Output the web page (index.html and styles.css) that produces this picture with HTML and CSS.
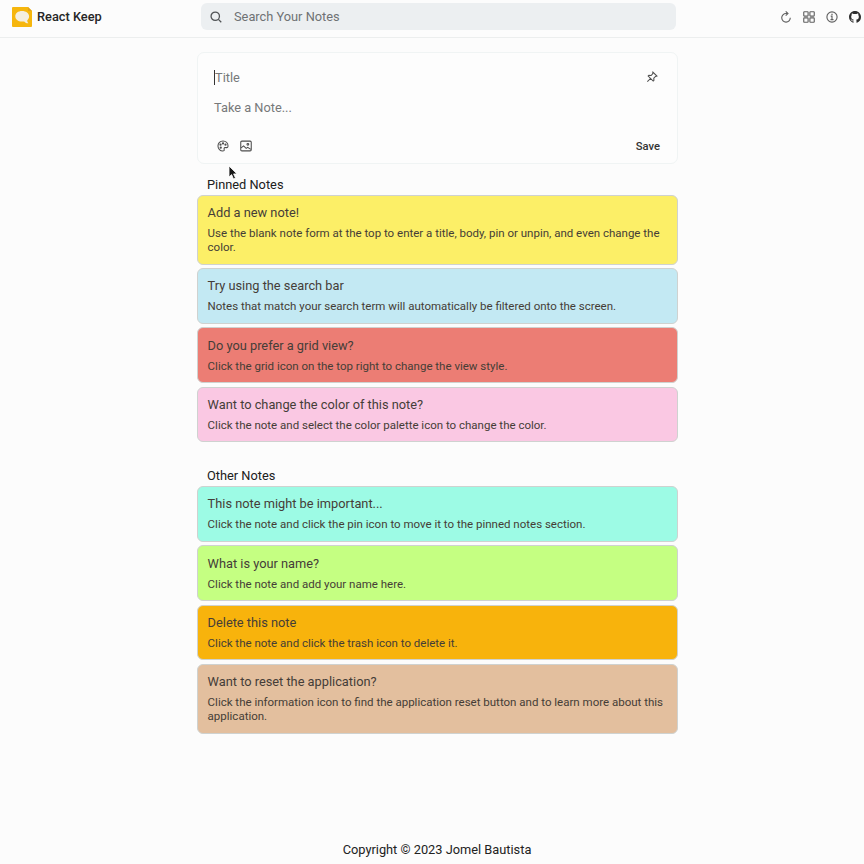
FILE: index.html
```
<!DOCTYPE html>
<html lang="en">
<head>
<meta charset="utf-8">
<title>React Keep</title>
<link rel="stylesheet" href="styles.css">
</head>
<body>
<header class="topbar">
  <div class="brand">
    <svg class="logo" viewBox="0 0 20 20"><path fill="#f6b60d" d="M1 0h15l4 4v15a1 1 0 0 1-1 1H1a1 1 0 0 1-1-1V1a1 1 0 0 1 1-1z"/><path fill="#e0a41a" d="M16 0v4h4z"/><path fill="#f4eedf" d="M10 4c-4 0-6.700 2.200-6.700 5.300 0 3.200 2.700 5.300 6.700 5.300.8 0 1.500-.1 2.200-.2 1 1.200 2.400 1.900 4.200 1.900-.8-.8-1.200-1.800-1.200-2.900 1.200-1 1.900-2.400 1.900-4.100C17.100 6.200 14 4 10 4z"/></svg>
    <span>React Keep</span>
  </div>
  <div class="search">
    <svg class="search-icon" viewBox="0 0 16 16"><circle cx="7" cy="7" r="5.600"/><path d="m11.200 11.200 3.800 3.800"/></svg>
    <span>Search Your Notes</span>
  </div>
  <nav class="actions">
    <svg viewBox="0 0 16 16" class="line"><path d="M9.500 3.400H8A5.700 5.700 0 1 0 13.700 9"/><path d="m7.600.6 3 2.800-3 2.800"/></svg>
    <svg viewBox="0 0 16 16" class="line"><rect x="1" y="1" width="5.800" height="5.800" rx=".8"/><rect x="9.200" y="1" width="5.800" height="5.800" rx=".8"/><rect x="1" y="9.200" width="5.800" height="5.800" rx=".8"/><rect x="9.200" y="9.200" width="5.800" height="5.800" rx=".8"/></svg>
    <svg viewBox="0 0 16 16" class="line"><circle cx="8" cy="8" r="6.800"/><path d="M6.300 6.800H8v4.700M6 11.500h4"/><path d="M8 3.700v1.500" stroke-width="1.600"/></svg>
    <svg viewBox="0 0 16 16" class="github"><path d="M8 0C3.580 0 0 3.580 0 8c0 3.540 2.290 6.530 5.470 7.590.4.070.55-.17.55-.38 0-.19-.01-.82-.01-1.490-2.010.37-2.530-.49-2.690-.94-.09-.23-.48-.94-.82-1.130-.28-.15-.68-.52-.01-.53.63-.01 1.080.58 1.230.82.72 1.210 1.870.87 2.330.66.07-.52.28-.87.51-1.070-1.780-.2-3.640-.89-3.640-3.950 0-.87.31-1.590.82-2.150-.08-.2-.36-1.020.08-2.120 0 0 .67-.21 2.200.82.64-.18 1.320-.27 2-.27s1.360.09 2 .27c1.530-1.040 2.200-.82 2.200-.82.44 1.100.16 1.920.08 2.120.51.56.82 1.270.82 2.150 0 3.070-1.870 3.750-3.650 3.950.29.25.54.73.54 1.480 0 1.070-.01 1.930-.01 2.200 0 .21.15.46.55.38A8.010 8.010 0 0 0 16 8c0-4.420-3.580-8-8-8"/></svg>
  </nav>
</header>
<main>
  <form class="composer">
    <div class="row"><span class="field field-active">Title</span>
      <svg class="pin" viewBox="0 0 16 16"><path d="m9.200 1.500 5.300 5.300-1.800.5-2.300 2.300.2 2.900-1 1L2.900 6.800l1-1 2.900.2 2.100-2.300zM6 10l-4.200 4.200"/></svg></div>
    <div class="row"><span class="field">Take a Note...</span></div>
    <div class="row tools">
      <svg viewBox="0 0 16 16"><path d="M8 1.300C4.200 1.300 1.300 4.200 1.300 8s3 6.700 6.500 6.700c1.300 0 2-.6 1.800-1.700-.3-1.500-.3-2.800 1.200-2.900 1.300-.1 3.900 1 3.900-2.100C14.700 4.200 11.800 1.300 8 1.300z"/><circle cx="8" cy="4.500" r=".8"/><circle cx="4.700" cy="6.300" r=".8"/><circle cx="11.300" cy="6.300" r=".8"/><circle cx="5" cy="10.200" r=".8"/></svg>
      <svg viewBox="0 0 16 16"><rect x="1" y="1.500" width="14" height="13" rx="1.500"/><path d="m1.500 10.500 3.300-2.600 3.400 3.300 2-1.400 4.300 2.700"/><circle cx="10.500" cy="5.800" r="1.200"/></svg>
      <span class="save">Save</span>
    </div>
  </form>
  <h2>Pinned Notes</h2>
  <section class="notes">
    <article class="note yellow"><h3>Add a new note!</h3><p>Use the blank note form at the top to enter a title, body, pin or unpin, and even change the color.</p></article>
    <article class="note blue"><h3>Try using the search bar</h3><p>Notes that match your search term will automatically be filtered onto the screen.</p></article>
    <article class="note red"><h3>Do you prefer a grid view?</h3><p>Click the grid icon on the top right to change the view style.</p></article>
    <article class="note pink"><h3>Want to change the color of this note?</h3><p>Click the note and select the color palette icon to change the color.</p></article>
  </section>
  <h2 class="other">Other Notes</h2>
  <section class="notes">
    <article class="note teal"><h3>This note might be important...</h3><p>Click the note and click the pin icon to move it to the pinned notes section.</p></article>
    <article class="note green"><h3>What is your name?</h3><p>Click the note and add your name here.</p></article>
    <article class="note orange"><h3>Delete this note</h3><p>Click the note and click the trash icon to delete it.</p></article>
    <article class="note tan"><h3>Want to reset the application?</h3><p>Click the information icon to find the application reset button and to learn more about this application.</p></article>
  </section>
</main>
<footer>Copyright © 2023 Jomel Bautista</footer>
<svg class="cursor" viewBox="0 0 10 15"><path d="M1 1v11l2.600-2.400 1.900 4.400 2-.9-1.900-4.200H9z" fill="#171717" stroke="#fff" stroke-width=".8"/></svg>
</body>
</html>
```
FILE: styles.css
```
* { box-sizing: border-box; }
body {
  margin: 0;
  height: 864px;
  display: flex;
  flex-direction: column;
  overflow: hidden;
  background: #fcfcfc;
  color: #262626;
  font-family: Roboto, "Liberation Sans", sans-serif;
}
.topbar {
  height: 38px;
  flex: none;
  display: grid;
  grid-template-columns: 201px 475px 1fr;
  align-items: start;
  border-bottom: 1px solid #eceeee;
}
.brand {
  display: flex;
  align-items: center;
  height: 33px;
  padding-left: 12px;
  gap: 5px;
  font-size: 12.800px;
  font-weight: 500;
}
.logo { width: 20px; height: 20px; }
.search {
  display: flex;
  align-items: center;
  gap: 12px;
  height: 27px;
  margin-top: 3px;
  padding-left: 9px;
  border-radius: 6px;
  background: #eceff1;
  color: #6f7274;
  font-size: 12.800px;
}
.search-icon { width: 12px; height: 12px; fill: none; stroke: #505355; stroke-width: 1.7; }
.actions {
  display: flex;
  align-items: center;
  justify-content: flex-end;
  gap: 11px;
  height: 33px;
  padding-right: 3px;
}
.actions svg { width: 12px; height: 12px; fill: #555; flex: none; }
.actions .line { fill: none; stroke: #606060; stroke-width: 1.5; }
.actions .github { fill: #2d2d2d; }
main { width: 481px; margin-left: 197px; padding-top: 14px; }
.composer {
  height: 112px;
  padding: 10px 17px 0 16px;
  border: 1px solid #f0f4f4;
  border-radius: 7px;
  background: #fdfdfd;
}
.row {
  display: flex;
  align-items: center;
  height: 28px;
  margin-bottom: 2px;
}
.field { color: #77797a; font-size: 12.800px; line-height: 15px; }
.field-active { box-shadow: -1px 0 #333; margin-left: 1px; }
.pin { width: 12px; height: 12px; margin-left: auto; margin-right: 2px; }
.composer svg { fill: none; stroke: #4d4d4d; stroke-width: 1.4; }
.tools { margin-top: 11px; padding-left: 2.500px; gap: 11px; }
.tools svg { width: 12px; height: 12px; }
.save { margin-left: auto; font-size: 11.200px; font-weight: 500; color: #333; }
h2 {
  margin: 13px 0 2px 10px;
  font-size: 12.800px;
  line-height: 16px;
  font-weight: 400;
  color: #202020;
}
.other { margin-top: 26px; }
.notes { display: grid; gap: 3.400px; }
.note {
  padding: 9.200px 9.600px 9.600px;
  border: 1px solid #cfd2d0;
  border-radius: 6px;
}
h3 { margin: 0 0 5px; font-size: 12.800px; line-height: 16px; font-weight: 400; color: #453d38; }
p { margin: 0; font-size: 11.500px; line-height: 14px; color: #453d36; }
.yellow { background: #fcef67; }
.blue { background: #c3e9f3; }
.red { background: #ec7d74; }
.pink { background: #fac8e3; }
.teal { background: #9dfbe5; }
.green { background: #c5ff82; }
.orange { background: #f8b30c; }
.tan { background: #e3bf9e; }
footer {
  margin-top: auto;
  height: 28px;
  padding-left: 10px;
  line-height: 28px;
  text-align: center;
  font-size: 12.800px;
  color: #222;
}
.cursor { position: absolute; left: 228px; top: 165px; width: 10px; height: 15px; }
```
